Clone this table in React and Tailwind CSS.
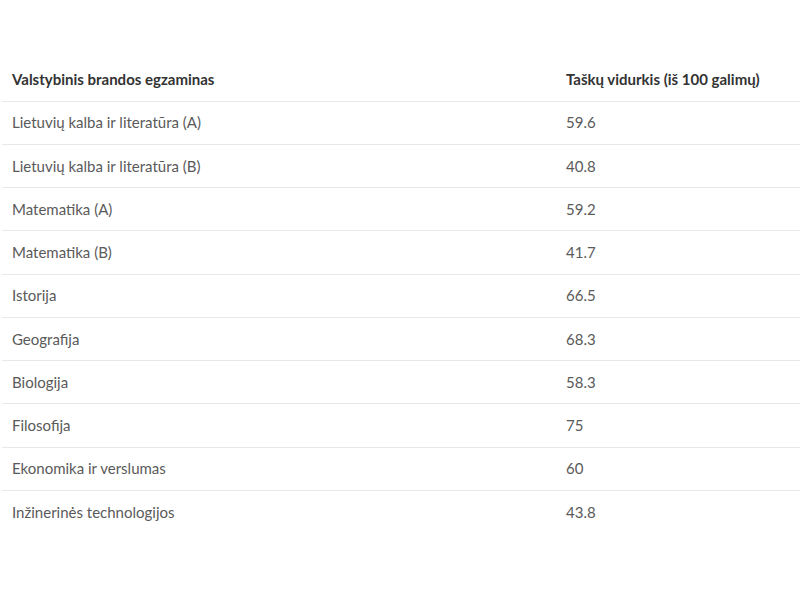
const rows = [
  ["Lietuvių kalba ir literatūra (A)", "59.6"],
  ["Lietuvių kalba ir literatūra (B)", "40.8"],
  ["Matematika (A)", "59.2"],
  ["Matematika (B)", "41.7"],
  ["Istorija", "66.5"],
  ["Geografija", "68.3"],
  ["Biologija", "58.3"],
  ["Filosofija", "75"],
  ["Ekonomika ir verslumas", "60"],
  ["Inžinerinės technologijos", "43.8"],
];

export default function App() {
  return (
    <div className="min-h-[600px] bg-white pt-[58px] pl-[2px]" style={{ fontFamily: "Lato, 'Open Sans', sans-serif" }}>
      <table className="w-full border-collapse">
        <thead>
          <tr className="h-[43px]">
            <th className="w-[554px] px-[10px] text-left align-middle text-[15px] font-bold text-[#333]">Valstybinis brandos egzaminas</th>
            <th className="px-[10px] text-left align-middle text-[15px] font-bold text-[#333]">Taškų vidurkis (iš 100 galimų)</th>
          </tr>
        </thead>
        <tbody>
          {rows.map(([a, b]) => (
            <tr key={a} className="h-[43.25px] border-t border-[#e8e8e8]">
              <td className="px-[10px] align-middle text-[15px] text-[#5a5a5a]">{a}</td>
              <td className="px-[10px] align-middle text-[15px] text-[#5a5a5a]">{b}</td>
            </tr>
          ))}
        </tbody>
      </table>
    </div>
  );
}
